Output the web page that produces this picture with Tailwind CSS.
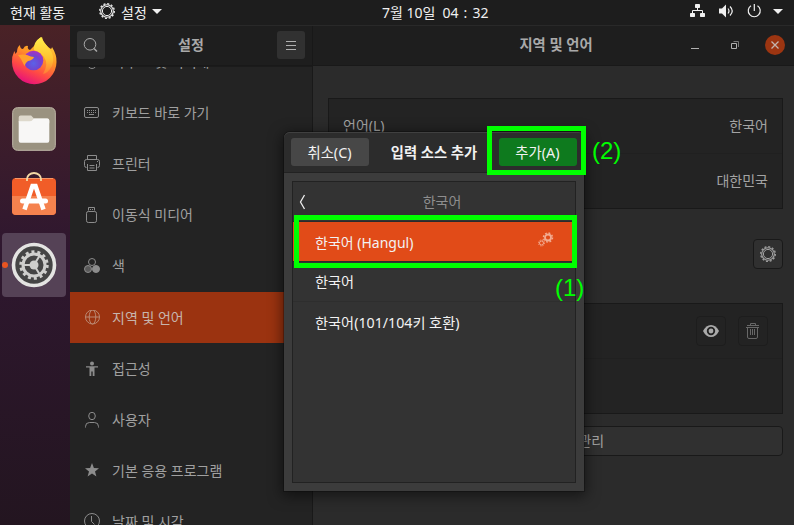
<!DOCTYPE html>
<html lang="ko">
<head>
<meta charset="utf-8">
<title>설정</title>
<script src="https://cdn.jsdelivr.net/npm/@tailwindcss/browser@4"></script>
</head>
<body class="w-[794px] h-[525px] overflow-hidden bg-[#1d1d1d] font-['Noto_Sans','Noto_Sans_CJK_KR',sans-serif] text-[14px] leading-[20px] text-[#a3a3a3]">
<svg width="0" height="0" class="absolute">
  <defs>
    <symbol id="cog" viewBox="0 0 16 16"><circle cx="8" cy="8" r="4.600" fill="none" stroke="currentColor" stroke-width="1"/><circle cx="8" cy="8" r="6.300" fill="none" stroke="currentColor" stroke-width="1.100"/><circle cx="8" cy="8" r="7.300" fill="none" stroke="currentColor" stroke-width="1.300" stroke-dasharray="2 1.822"/></symbol>
  </defs>
</svg>
<div class="relative w-[794px] h-[525px] flex flex-col overflow-hidden">
  <!-- top panel -->
  <div class="h-[25px] shrink-0 bg-[#1d1d1d] text-[#f0f0f0] grid grid-cols-[99px_282px_1fr_auto] items-center">
    <span class="pl-[10px]">현재 활동</span>
    <div class="flex items-center">
      <svg class="size-4 mt-[-3px]"><use href="#cog"/></svg>
      <span class="ml-[6px]">설정</span>
      <svg class="ml-[5px] mt-[-2px]" width="10" height="5"><path d="M0 0H10L5 5Z" fill="#f0f0f0"/></svg>
    </div>
    <span class="pl-[1px] flex"><span>7월 10일</span><span class="ml-[7px] [word-spacing:1.500px]">04 : 32</span></span>
    <div class="flex items-center pr-[11px] mt-[-3px]">
      <svg width="16" height="14" viewBox="0 0 16 14" fill="#f0f0f0"><rect x="5" y="0" width="5" height="4" rx=".7"/><rect x="0" y="9" width="5" height="4" rx=".7"/><rect x="10" y="9" width="5" height="4" rx=".7"/><path d="M7.500 4V6.500M2.500 9V6.500H12.500V9" stroke="#f0f0f0" fill="none"/></svg>
      <svg class="ml-[13px]" width="16" height="14" viewBox="0 0 16 14"><path d="M0 4.500H3L7 .5V13.500L3 9.500H0Z" fill="#f0f0f0"/><path d="M9 4.500Q11 7 9 9.500M11 2.500Q15.500 7 11 11.500" fill="none" stroke="#f0f0f0" stroke-width="1.200"/></svg>
      <svg class="ml-[12px]" width="15" height="14" viewBox="0 0 15 14"><path d="M4 1.700A6 6 0 1 0 10.500 1.700M7.300 0V7" fill="none" stroke="#f0f0f0" stroke-width="1.200"/></svg>
      <svg class="ml-[11px] mt-[1px]" width="10" height="5"><path d="M0 0H10L5 5Z" fill="#f0f0f0"/></svg>
    </div>
  </div>

  <div class="flex flex-1 min-h-0">
    <!-- dock -->
    <div class="relative w-[70px] shrink-0 bg-linear-to-b from-[#4a2226] via-[#2f172f] via-45% to-[#231520] pt-[10px] flex flex-col items-center overflow-hidden">
      <svg class="ml-[-2px] shrink-0" width="48" height="50" viewBox="0 0 48 50">
        <defs>
          <linearGradient id="fx" x1=".8" y1="0" x2=".35" y2="1"><stop offset="0" stop-color="#ffe040"/><stop offset=".4" stop-color="#ff9a25"/><stop offset=".72" stop-color="#ff4a45"/><stop offset="1" stop-color="#e6107c"/></linearGradient>
          <radialGradient id="fp" cx=".5" cy=".65" r=".6"><stop offset="0" stop-color="#5a62e8"/><stop offset=".6" stop-color="#7244cf"/><stop offset="1" stop-color="#a034c4"/></radialGradient>
          <linearGradient id="fy" x1="0" y1="0" x2="0" y2="1"><stop offset="0" stop-color="#fff04a"/><stop offset=".6" stop-color="#ffc02f"/><stop offset="1" stop-color="#ff7a38"/></linearGradient>
        </defs>
        <path d="M7 17Q7 12 10 10Q10 14 13 14Q15 10 18 11Q17 14 20 15L26 9Q27 4 32 2Q33 7 38 12L41 14Q42 13 42 12Q47 20 46.500 27A22 22 0 0 1 2 27Q1.500 22 4 17Q5 15 5 19Z" fill="url(#fx)"/>
        <path d="M24 15Q23 7 31 2Q33 7 38 12Q46 21 42 31Q38 38 33 39Q39 29 34 22Q30 17 24 15Z" fill="url(#fy)"/>
        <circle cx="23.500" cy="25.500" r="9.800" fill="url(#fp)"/>
        <path d="M8 20Q13 19 17 20Q21 22 24 22Q23 25 18 26Q15 28 14.500 31Q13 28 11 24Z" fill="#ffa12b"/>
      </svg>
      <svg class="ml-[-2px] mt-[22px] shrink-0" width="44" height="44" viewBox="0 0 46 46"><rect x=".7" y=".7" width="44.600" height="44.600" rx="5" fill="#9a9280" stroke="#c3bcab"/><path d="M7 16V11Q7 9 9 9H20L23 12H37Q39 12 39 14V17Z" fill="#ded9cc"/><path d="M7 15H18Q21 15 23 12H37Q39 12 39 14V35Q39 37.500 37 37.500H9Q7 37.500 7 35Z" fill="#f8f7f6"/></svg>
      <svg class="ml-[-2px] mt-[21px] shrink-0" width="46" height="46" viewBox="0 0 46 46"><rect x="1" y="6" width="44" height="37" rx="4" fill="#f15d28"/><path d="M1 24H45V39Q45 43 41 43H5Q1 43 1 39Z" fill="#f5824e"/><path d="M4 6.500H42" stroke="#f79666" stroke-width="1"/><path d="M16 9V7A7 6 0 0 1 30 7V9" fill="none" stroke="#f4d9a5" stroke-width="1.800"/><path d="M13.500 37.500L21.500 14H24.500L32.500 37.500" fill="none" stroke="#fff" stroke-width="4.500"/><rect x="9" y="26.500" width="28" height="5" rx="2.500" fill="#fff"/></svg>
      <div class="relative ml-[-2px] mt-[15px] w-[64px] h-[64px] shrink-0 rounded-[4px] bg-[#554256] flex items-center justify-center">
        <svg width="46" height="46" viewBox="0 0 46 46"><circle cx="23" cy="23" r="20.500" fill="#454545" stroke="#e4e4e2" stroke-width="3.600"/><circle cx="23" cy="23" r="11" fill="none" stroke="#cfcfcd" stroke-width="3"/><circle cx="23" cy="23" r="13.200" fill="none" stroke="#cfcfcd" stroke-width="3" stroke-dasharray="3 2.924"/><circle cx="23" cy="23" r="4.500" fill="#cfcfcd"/><path d="M23 23H12M23 23L29 13M23 23L29 33" stroke="#cfcfcd" stroke-width="2"/></svg>
        <span class="absolute left-[0px] top-[29px] size-[6px] rounded-full bg-[#e95420]"></span>
      </div>
    </div>

    <!-- settings window -->
    <div class="flex flex-col flex-1 min-w-0 border-t border-[#292929]">
      <div class="flex h-[40px] shrink-0 bg-[#1e1e1e] border-b border-[#191919]">
        <div class="w-[243px] border-r border-[#181818] flex items-center justify-between pl-[7px] pr-[7px] pb-[1px]">
          <div class="size-[28px] rounded-[3px] bg-[#313131] flex items-center justify-center">
            <svg width="16" height="16" viewBox="0 0 16 16" fill="none" stroke="#aaa"><circle cx="7" cy="7.300" r="5.800"/><path d="M11 11.500L14 14.500" stroke-width="1.500"/></svg>
          </div>
          <b class="text-[#a9a9a9] font-bold">설정</b>
          <div class="size-[28px] rounded-[3px] bg-[#313131] flex items-center justify-center">
            <svg width="10" height="9"><path d="M0 .5H10M0 4.500H10M0 8.500H10" stroke="#b0b0b0"/></svg>
          </div>
        </div>
        <div class="flex-1 grid grid-cols-[1fr_auto_1fr] items-center pb-[1px]">
          <span></span>
          <b class="pl-[5px] text-[14.300px] text-[#a9a9a9]">지역 및 언어</b>
          <div class="flex items-center justify-end pr-[9px]">
            <svg class="mt-[6px]" width="8" height="1"><path d="M0 .5H8" stroke="#b0b0b0"/></svg>
            <svg class="ml-[32px]" width="8" height="8" fill="none" stroke="#b0b0b0"><path d="M.5 2.500H5.500V7.500H.5Z"/><path d="M2.500 .5H7.500V6" stroke="#777"/></svg>
            <div class="ml-[26px] size-[20px] rounded-full bg-[#9c3511] flex items-center justify-center"><svg width="8" height="8"><path d="M.5 .5L7.500 7.500M7.500 .5L.5 7.500" stroke="#c4b4ad" stroke-width="1.300"/></svg></div>
          </div>
        </div>
      </div>

      <div class="flex flex-1 min-h-0">
        <!-- categories -->
        <div class="w-[243px] shrink-0 bg-[#232323] border-r border-[#191919] border-t border-t-[#1b1b1b] overflow-hidden">
          <div class="mt-[-30px] text-[#a0a0a0]">
            <div class="h-[51px] flex items-center gap-[12px] pl-[14px]"><svg width="16" height="16" fill="none" stroke="#8c8c8c"><rect x="3.500" y=".5" width="9" height="13" rx="4.500"/></svg><span class="pb-[1px]">마우스 및 터치패드</span></div>
            <div class="h-[51px] flex items-center gap-[12px] pl-[14px] pb-[2px]"><svg width="16" height="16" fill="none" stroke="#8c8c8c"><rect x=".5" y="2.500" width="14" height="10" rx="1.500"/><path d="M3 5.500H12M3 7.500H12" stroke-dasharray="1 1"/><path d="M5 9.500H10"/></svg><span>키보드 바로 가기</span></div>
            <div class="h-[51px] flex items-center gap-[12px] pl-[14px] pb-[2px]"><svg class="mt-[-2px]" width="16" height="16" fill="none" stroke="#8c8c8c"><path d="M3.500 4V.5H12.500V4M2.500 12.500Q.5 12.500 .5 10.500V6.500Q.5 4.500 2.500 4.500H13.500Q15.500 4.500 15.500 6.500V10.500Q15.500 12.500 13.500 12.500M3.500 9V15.500H12.500V9M5.500 10.500H10.500M5.500 13H10.500"/><path d="M13 6.500H14"/></svg><span>프린터</span></div>
            <div class="h-[51px] flex items-center gap-[12px] pl-[14px] pb-[2px]"><svg width="16" height="16" fill="none" stroke="#8c8c8c"><rect x="2.500" y="4.500" width="10" height="11" rx="1.800"/><path d="M4.500 3.500V.5H10.500V3.500M6.500 2V3M8.500 2V3"/></svg><span>이동식 미디어</span></div>
            <div class="h-[51px] flex items-center gap-[12px] pl-[14px] pb-[2px]"><svg width="16" height="16" stroke="#8c8c8c"><circle cx="8" cy="4" r="3.500" fill="none"/><circle cx="4" cy="11" r="3.500" fill="#5a5a5a"/><circle cx="12" cy="11" r="3.500" fill="#8c8c8c"/></svg><span>색</span></div>
            <div class="h-[51px] flex items-center gap-[12px] pl-[14px] bg-[#9b3310] text-[#c7b5ad]"><svg width="16" height="16" fill="none" stroke="#bb8872"><circle cx="8.500" cy="7" r="7"/><ellipse cx="8.500" cy="7" rx="3.300" ry="7"/><path d="M1.500 7H15.500"/></svg><span>지역 및 언어</span></div>
            <div class="h-[51px] flex items-center gap-[12px] pl-[14px]"><svg width="16" height="16" fill="#8c8c8c"><circle cx="8" cy="2.500" r="2"/><path d="M2 5.200H14V6.500H10.500V15H8.700V10.500H7.300V15H5.500V6.500H2Z"/></svg><span>접근성</span></div>
            <div class="h-[51px] flex items-center gap-[12px] pl-[14px]"><svg width="16" height="16" fill="none" stroke="#8c8c8c"><ellipse cx="8" cy="4" rx="3.300" ry="3.700"/><path d="M1.500 15.500V14.500Q1.500 10.500 5.500 10.500H10.500Q14.500 10.500 14.500 14.500V15.500"/></svg><span>사용자</span></div>
            <div class="h-[51px] flex items-center gap-[12px] pl-[14px]"><svg width="16" height="16" fill="#8c8c8c"><path d="M8 0L9.900 5L15 5.200L11 8.400L12.400 13.400L8 10.500L3.600 13.400L5 8.400L1 5.200L6.100 5Z"/></svg><span>기본 응용 프로그램</span></div>
            <div class="h-[51px] flex items-center gap-[12px] pl-[14px]"><svg class="mt-[-1px]" width="16" height="16" fill="none" stroke="#8c8c8c"><circle cx="8" cy="8" r="7.500"/><path d="M7.500 3V8.500L10.500 11.500"/></svg><span>날짜 및 시각</span></div>
          </div>
        </div>

        <!-- region and language -->
        <div class="flex-1 bg-[#2b2b2b] pl-[15px] pr-[11px] pt-[32px] flex flex-col">
          <div class="h-[111px] shrink-0 border border-[#191919] bg-[#232323]">
            <div class="h-[55px] border-b border-[#202020] px-[14px] flex justify-between items-center"><span>언어(L)</span><span>한국어</span></div>
            <div class="h-[54px] px-[14px] flex justify-end items-center"><span>대한민국</span></div>
          </div>
          <div class="mt-[30px] flex justify-end">
            <div class="size-[30px] rounded-[4px] border border-[#191919] bg-[#303030] flex items-center justify-center"><svg class="size-4"><use href="#cog"/></svg></div>
          </div>
          <div class="mt-[34px] h-[111px] shrink-0 border border-[#191919] bg-[#232323]">
            <div class="h-[55px] border-b border-[#202020] pr-[14px] flex justify-end items-center gap-[12px]">
              <div class="size-[30px] rounded-[4px] border border-[#1d1d1d] flex items-center justify-center"><svg width="16" height="12" viewBox="0 0 16 12"><path d="M0 6Q3 0 8 0T16 6Q13 12 8 12T0 6Z" fill="#aaa"/><circle cx="8" cy="6" r="3.300" fill="#aaa" stroke="#232323" stroke-width="1.800"/></svg></div>
              <div class="size-[30px] rounded-[4px] border border-[#1d1d1d] flex items-center justify-center"><svg width="14" height="16" fill="none" stroke="#686868"><path d="M4.500 2V.5H9.500V2M1 2.500H13M0 4.500H13" /><path d="M1.500 5V14Q1.500 15.500 3 15.500H10Q11.500 15.500 11.500 14V5M4.500 6V12M6.500 6V12M8.500 6V12"/></svg></div>
            </div>
          </div>
          <div class="mt-[12px] h-[30px] rounded-[4px] border border-[#191919] bg-[#303030] flex items-center justify-center">설치한 언어 관리</div>
        </div>
      </div>
    </div>
  </div>

  <!-- add input source dialog -->
  <div class="absolute left-[284px] top-[132px] w-[300px] h-[359px] rounded-t-[6px] bg-[#3c3c3c] shadow-[0_3px_14px_2px_rgba(0,0,0,0.5),0_0_0_1px_rgba(0,0,0,0.25)] flex flex-col text-[#f2f2f2]">
    <div class="h-[41px] shrink-0 rounded-t-[6px] bg-[#2c2c2c] border-t border-t-[#404040] border-b border-b-[#222] px-[7px] pb-[1px] flex items-center justify-between">
      <div class="w-[78px] h-[28px] rounded-[3px] bg-[#474747] flex items-center justify-center text-[14.400px] pr-[1px] pt-[1px]">취소(C)</div>
      <b class="text-[14.300px] pt-[1px]">입력 소스 추가</b>
      <div class="w-[78px] h-[28px] rounded-[3px] bg-[#0e7a1e] flex items-center justify-center text-[14.400px] pr-[1px] pt-[1px]">추가(A)</div>
    </div>
    <div class="mx-[8px] mt-[8px] h-[302px] border border-[#222] bg-[#333]">
      <div class="h-[40px] border-b border-[#2b2b2b] grid grid-cols-[20px_1fr_4px] items-center text-[#8e8e8e]">
        <svg class="ml-[6px]" width="7" height="16" fill="none" stroke="#eee" stroke-width="1.300"><path d="M5.500 1L1.500 8L5.500 15"/></svg>
        <span class="text-center pt-[1px]">한국어</span>
      </div>
      <div class="h-[40px] border-b border-[#2b2b2b] bg-[#e14b18] pl-[22px] pr-[21px] flex items-center justify-between">
        <span class="pt-[2px]">한국어 (Hangul)</span>
        <svg class="mt-[-4px]" width="16" height="16" fill="none" stroke="#f2ab90"><circle cx="10" cy="5.500" r="3" stroke-width="1.800"/><circle cx="10" cy="5.500" r="4.500" stroke-width="1.500" stroke-dasharray="1.800 1.734"/><circle cx="3.500" cy="11" r="2"/><circle cx="3.500" cy="11" r="3" stroke-dasharray="1.200 1.156"/></svg>
      </div>
      <div class="h-[40px] border-b border-[#2e2e2e] pl-[22px] pt-[1px] flex items-center text-[14.200px]">한국어</div>
      <div class="h-[40px] pl-[22px] pt-[2px] flex items-center text-[14.200px]">한국어(101/104키 호환)</div>
    </div>
  </div>

  <!-- step callouts -->
  <div class="absolute left-[487px] top-[126px] w-[99px] h-[49px] border-5 border-[#00ff00]"></div>
  <div class="absolute left-[294px] top-[215px] w-[283px] h-[53px] border-5 border-[#00ff00]"></div>
  <span class="absolute left-[592px] top-[139px] text-[24px] leading-[24px] text-[#00ff00] font-['Liberation_Sans',sans-serif]">(2)</span>
  <span class="absolute left-[555px] top-[276px] text-[24px] leading-[24px] text-[#00ff00] font-['Liberation_Sans',sans-serif]">(1)</span>
</div>
</body>
</html>
